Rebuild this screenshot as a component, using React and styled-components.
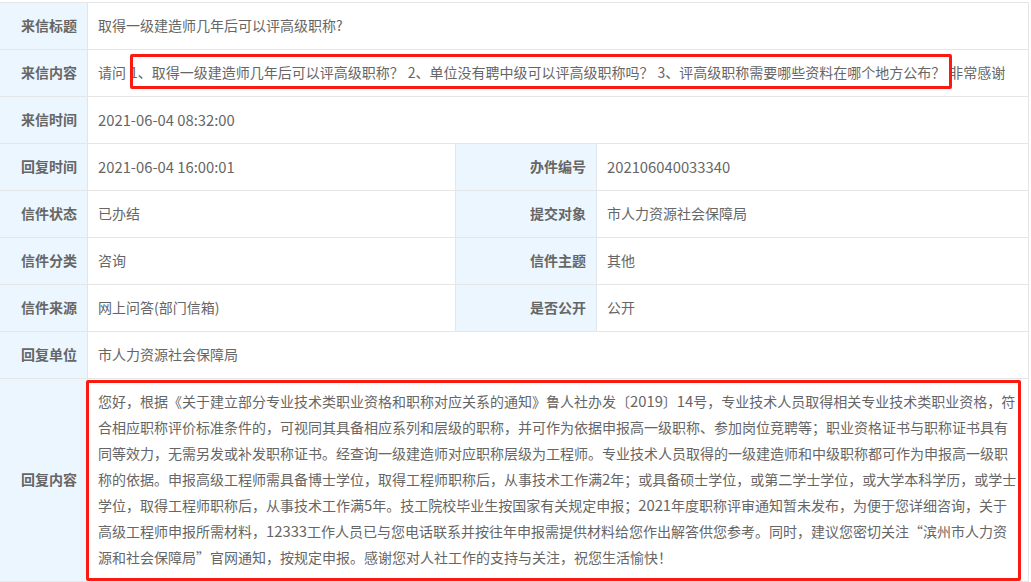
import React from 'react'
import styled, { createGlobalStyle } from 'styled-components'

const GlobalStyle = createGlobalStyle`
  html, body { margin: 0; padding: 0; background: #fff; }
  body {
    font-family: "Noto Sans CJK SC", "Liberation Sans", sans-serif;
    font-size: 14px;
    color: #666;
  }
`

const Page = styled.div`
  width: 1031px;
  height: 582px;
  padding-top: 2px;
  box-sizing: border-box;
  overflow: hidden;
`

const Table = styled.div`
  width: 1029px;
  box-sizing: border-box;
  border-top: 1px solid #e6e6e6;
  border-right: 1px solid #e6e6e6;
`

const Row = styled.div`
  display: grid;
  grid-template-columns: ${p => (p.$split ? '88px 368px 141px 1fr' : '88px 1fr')};
  height: ${p => p.$height || 47}px;
  box-sizing: border-box;
  border-bottom: 1px solid #e6e6e6;
`

const Label = styled.div`
  display: flex;
  align-items: center;
  justify-content: flex-end;
  padding: 0 10px 2px 0;
  background: #ebf6ff;
  border-right: 1px solid #e0e6ea;
  font-weight: bold;
  color: #666;
  white-space: nowrap;
`

const Value = styled.div`
  position: relative;
  display: flex;
  align-items: center;
  padding: 0 0 2px 10px;
  min-width: 0;
  white-space: nowrap;
  border-right: ${p => (p.$divided ? '1px solid #e6e6e6' : 'none')};
`

const Num = styled.span`
  font-size: 14.8px;
`

const Gap = styled.span`
  display: inline-block;
  width: ${p => p.$w}px;
`

const Highlight = styled.div`
  position: absolute;
  box-sizing: border-box;
  border: 3px solid #fb1a10;
  border-radius: 2px;
  pointer-events: none;
`

const QuestionMark = styled(Highlight)`
  left: 42px;
  top: 4px;
  width: 822px;
  height: 35px;
`

const ReplyMark = styled(Highlight)`
  left: -2px;
  top: 1px;
  width: 935px;
  height: 201px;
`

const ReplyBody = styled.div`
  line-height: 26px;
`

const Line = styled.div`
  height: 26px;
  white-space: nowrap;
`

// runs of digits are a little larger, as in the original font
const withNums = text =>
  text.split(/([\d][\d:\- ]*\d|\d)/).map((part, i) => (i % 2 ? <Num key={i}>{part}</Num> : part))

const replyLines = [
  '您好，根据《关于建立部分专业技术类职业资格和职称对应关系的通知》鲁人社办发〔2019〕14号，专业技术人员取得相关专业技术类职业资格，符',
  '合相应职称评价标准条件的，可视同其具备相应系列和层级的职称，并可作为依据申报高一级职称、参加岗位竞聘等；职业资格证书与职称证书具有',
  '同等效力，无需另发或补发职称证书。经查询一级建造师对应职称层级为工程师。专业技术人员取得的一级建造师和中级职称都可作为申报高一级职',
  '称的依据。申报高级工程师需具备博士学位，取得工程师职称后，从事技术工作满2年；或具备硕士学位，或第二学士学位，或大学本科学历，或学士',
  '学位，取得工程师职称后，从事技术工作满5年。技工院校毕业生按国家有关规定申报；2021年度职称评审通知暂未发布，为便于您详细咨询，关于',
  '高级工程师申报所需材料，12333工作人员已与您电话联系并按往年申报需提供材料给您作出解答供您参考。同时，建议您密切关注“滨州市人力资',
  '源和社会保障局”官网通知，按规定申报。感谢您对人社工作的支持与关注，祝您生活愉快！',
]

const splitRows = [
  ['回复时间', '2021-06-04 16:00:01', '办件编号', '202106040033340'],
  ['信件状态', '已办结', '提交对象', '市人力资源社会保障局'],
  ['信件分类', '咨询', '信件主题', '其他'],
  ['信件来源', '网上问答(部门信箱)', '是否公开', '公开'],
]

export default function App() {
  return (
    <Page>
      <GlobalStyle />
      <Table>
        <Row>
          <Label>来信标题</Label>
          <Value>取得一级建造师几年后可以评高级职称?</Value>
        </Row>
        <Row>
          <Label>来信内容</Label>
          <Value>
            请问<Gap $w={4} />1、取得一级建造师几年后可以评高级职称？<Gap $w={4} />2、单位没有聘中级可以评高级职称吗？<Gap $w={4} />3、评高级职称需要哪些资料在哪个地方公布？<Gap $w={4} />非常感谢
            <QuestionMark />
          </Value>
        </Row>
        <Row>
          <Label>来信时间</Label>
          <Value><span>{withNums('2021-06-04 08:32:00')}</span></Value>
        </Row>
        {splitRows.map(r => (
          <Row $split key={r[0]}>
            <Label>{r[0]}</Label>
            <Value $divided><span>{withNums(r[1])}</span></Value>
            <Label>{r[2]}</Label>
            <Value><span>{withNums(r[3])}</span></Value>
          </Row>
        ))}
        <Row>
          <Label>回复单位</Label>
          <Value>市人力资源社会保障局</Value>
        </Row>
        <Row $height={203}>
          <Label>回复内容</Label>
          <Value>
            <ReplyBody>
              {replyLines.map((l, i) => <Line key={i}>{withNums(l)}</Line>)}
            </ReplyBody>
            <ReplyMark />
          </Value>
        </Row>
      </Table>
    </Page>
  )
}
